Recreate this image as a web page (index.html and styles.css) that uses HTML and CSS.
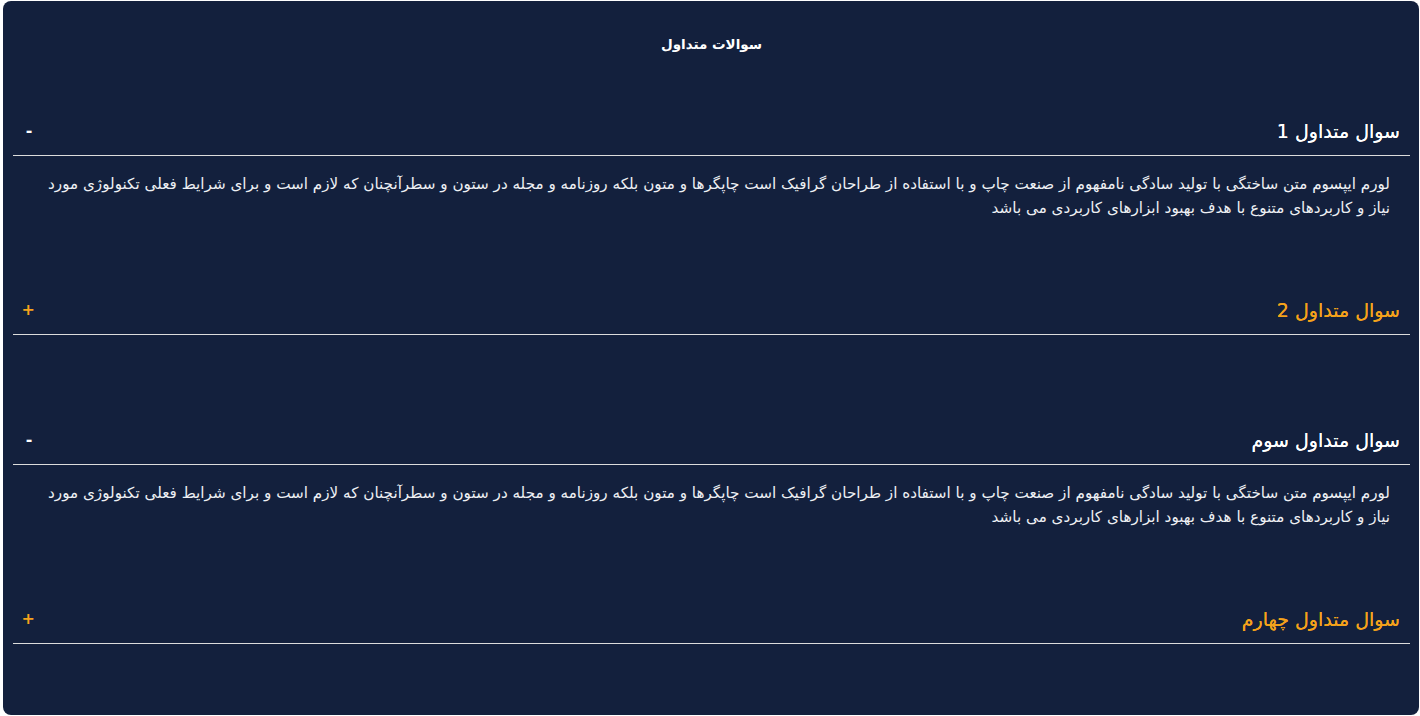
FILE: index.html
```html
<!DOCTYPE html>
<html lang="fa" dir="rtl">
<head>
<meta charset="utf-8">
<title>سوالات متداول</title>
<link rel="stylesheet" href="styles.css">
</head>
<body>
<section class="faq">
  <h2 class="faq-title">سوالات متداول</h2>
  <div class="faq-list">
    <div class="faq-item open">
      <div class="faq-head"><span class="faq-q">سوال متداول 1</span><span class="faq-toggle">-</span></div>
      <div class="faq-body">لورم ایپسوم متن ساختگی با تولید سادگی نامفهوم از صنعت چاپ و با استفاده از طراحان گرافیک است چاپگرها و متون بلکه روزنامه و مجله در ستون و سطرآنچنان که لازم است و برای شرایط فعلی تکنولوژی مورد نیاز و کاربردهای متنوع با هدف بهبود ابزارهای کاربردی می باشد</div>
    </div>
    <div class="faq-item">
      <div class="faq-head"><span class="faq-q">سوال متداول 2</span><span class="faq-toggle">+</span></div>
    </div>
    <div class="faq-item open">
      <div class="faq-head"><span class="faq-q">سوال متداول سوم</span><span class="faq-toggle">-</span></div>
      <div class="faq-body">لورم ایپسوم متن ساختگی با تولید سادگی نامفهوم از صنعت چاپ و با استفاده از طراحان گرافیک است چاپگرها و متون بلکه روزنامه و مجله در ستون و سطرآنچنان که لازم است و برای شرایط فعلی تکنولوژی مورد نیاز و کاربردهای متنوع با هدف بهبود ابزارهای کاربردی می باشد</div>
    </div>
    <div class="faq-item">
      <div class="faq-head"><span class="faq-q">سوال متداول چهارم</span><span class="faq-toggle">+</span></div>
    </div>
  </div>
</section>
</body>
</html>
```

FILE: styles.css
```css
html, body {
  margin: 0;
  padding: 0;
  background: #ffffff;
}
body {
  padding: 1px 1px 1px 3px;
  font-family: "DejaVu Sans", "Noto Sans", sans-serif;
}
.faq {
  background: #13203d;
  border-radius: 8px;
  height: 714px;
  box-sizing: border-box;
  padding: 27px 9px 0 10px;
  color: #ffffff;
}
.faq-title {
  margin: 0;
  text-align: center;
  font-size: 13.5px;
  line-height: 32px;
  font-weight: bold;
}
.faq-list {
  margin-top: 47px;
  display: flex;
  flex-direction: column;
}
.faq-item {
  margin-bottom: 81px;
}
.faq-item.open {
  margin-bottom: 66px;
}
.faq-head {
  display: flex;
  justify-content: space-between;
  align-items: center;
  padding: 8px 10px 8px 10px;
  border-bottom: 1px solid #dcdcdc;
  line-height: 32px;
}
.faq-q {
  font-size: 19px;
  color: #f5a21b;
  text-shadow: 0 0 0.4px currentColor;
}
.faq-toggle {
  font-size: 16px;
  font-weight: bold;
  color: #f5a21b;
  width: 12px;
  text-align: center;
}
.faq-item.open .faq-q,
.faq-item.open .faq-toggle {
  color: #ffffff;
}
.faq-body {
  padding: 16px 20px 0 20px;
  font-size: 15.2px;
  line-height: 24px;
  color: #eef0f4;
}
```
